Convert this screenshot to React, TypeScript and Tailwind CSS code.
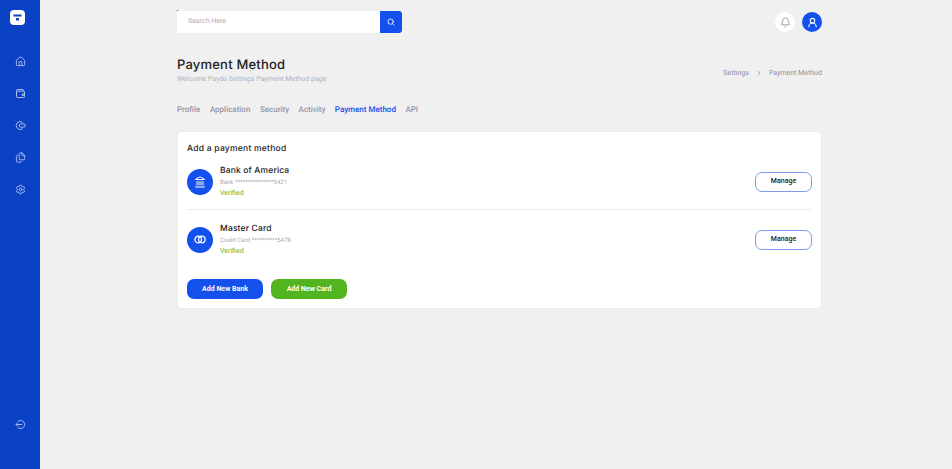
import React from 'react';
import { Bell, ChevronRight, Files, Home, Landmark, Search, Settings, UserRound } from 'lucide-react';

const heading = "font-['Inter','Liberation_Sans',sans-serif]";

const tabs = ['Profile', 'Application', 'Security', 'Activity', 'Payment Method', 'API'];

const Logo = () => (
  <div className="w-[15px] h-[15px] bg-white rounded-[4px] flex items-center justify-center">
    <svg width="9" height="9" viewBox="0 0 9 9">
      <rect x="0.5" y="1.5" width="8" height="2" fill="#0b41c4" />
      <rect x="3" y="5" width="3" height="2.4" fill="#0b41c4" />
    </svg>
  </div>
);

const WalletIcon = () => (
  <svg width="11" height="11" viewBox="0 0 11 11" fill="none" stroke="currentColor" strokeWidth="1">
    <path d="M1.5 3.5V2.2a.8.8 0 0 1 .8-.7h5.4a.8.8 0 0 1 .8.7v1" />
    <rect x="1.5" y="3.2" width="8" height="6.3" rx="0.8" />
    <path d="M9.5 6H7.2v1.4h2.3" />
  </svg>
);

const CardShieldIcon = () => (
  <svg width="11" height="11" viewBox="0 0 11 11" fill="none" stroke="currentColor" strokeWidth="1">
    <path d="M7.5 2.2A4 4 0 1 0 7.5 8.8" />
    <rect x="4.5" y="3.9" width="5.5" height="3.2" rx="0.7" />
  </svg>
);

const ExitIcon = () => (
  <svg width="11" height="11" viewBox="0 0 11 11" fill="none" stroke="currentColor" strokeWidth="1">
    <path d="M2.6 2.8A4 4 0 1 1 2.6 8.2" />
    <path d="M7 5.5H1M2.8 3.7 1 5.5l1.8 1.8" />
  </svg>
);

const Rings = () => (
  <svg width="12" height="9" viewBox="0 0 12 9" fill="none" stroke="white" strokeWidth="1.3">
    <circle cx="4.2" cy="4.5" r="3.3" />
    <circle cx="7.8" cy="4.5" r="3.3" />
  </svg>
);

const Method = ({ icon, name, detail }: { icon: React.ReactNode; name: string; detail: string }) => (
  <div className="flex items-center justify-between">
    <div className="flex items-center gap-[7px]">
      <div className="w-[26px] h-[26px] rounded-full bg-[#1450ec] flex items-center justify-center">{icon}</div>
      <div>
        <p className={`${heading} text-[8.5px] leading-[12px] font-medium text-[#222] tracking-[0.15px]`}>{name}</p>
        <p className="text-[6px] leading-[10px] mt-[1px] text-[#a9a9b8]">{detail}</p>
        <p className="text-[7px] leading-[10px] text-[#5cb531]">Verified</p>
      </div>
    </div>
    <button className="w-[57px] h-[20px] rounded-[7px] border border-[#7f9df0] bg-white text-[7px] font-medium text-[#222]">
      Manage
    </button>
  </div>
);

const App: React.FC = () => {
  return (
    <div className="h-[469px] w-[952px] flex bg-[#f0f0f0] overflow-hidden font-['Roboto',sans-serif] antialiased [text-rendering:geometricPrecision]">
      <aside className="w-10 bg-[#0b41c4] flex flex-col items-center pt-[10px] pb-[39px]">
        <div className="self-start ml-[10px]">
          <Logo />
        </div>
        <nav className="mt-[31px] flex flex-col gap-[21px] text-[#a8bdf0]">
          <Home size={11} />
          <WalletIcon />
          <CardShieldIcon />
          <Files size={11} />
          <Settings size={11} />
        </nav>
        <div className="mt-auto text-[#a8bdf0]">
          <ExitIcon />
        </div>
      </aside>

      <main className="w-[645px] ml-[137px] pt-[11px]">
        <header className="flex items-center justify-between">
          <div className="relative w-[225px] h-[22px] flex bg-white rounded-[2px]">
            <span className="absolute left-0 -top-px w-px h-px bg-[#555]" />
            <div className="flex-1 pl-[11px] text-[7px] leading-[21px] text-[#a9a9b8]">Search Here</div>
            <div className="w-[22px] bg-[#1450ec] rounded-r-[3px] flex items-center justify-center">
              <Search size={8} strokeWidth={2.5} className="text-white" />
            </div>
          </div>
          <div className="flex items-center gap-[7px]">
            <div className="w-5 h-5 rounded-full bg-white flex items-center justify-center">
              <Bell size={11} className="text-[#9a9aa5]" />
            </div>
            <div className="w-5 h-5 rounded-full bg-[#1450ec] flex items-center justify-center">
              <UserRound size={11} strokeWidth={2.2} className="text-white" />
            </div>
          </div>
        </header>

        <div className="mt-[22px] flex items-center justify-between">
          <div>
            <h1 className={`${heading} text-[13px] leading-[20px] font-medium text-[#222] tracking-[0.2px]`}>Payment Method</h1>
            <p className="text-[7px] leading-[9px] text-[#b0b0bd]">Welcome Paydo Settings Payment Method page</p>
          </div>
          <div className="flex items-center gap-[6px] text-[7px] text-[#8f8fa6] mt-[7px]">
            <span>Settings</span>
            <ChevronRight size={8} />
            <span>Payment Method</span>
          </div>
        </div>

        <div className="mt-[20px] flex gap-[9.5px] text-[8px] leading-[12px] font-medium text-[#9696aa]">
          {tabs.map((t) => (
            <span key={t} className={t === 'Payment Method' ? 'text-[#1450ec]' : ''}>
              {t}
            </span>
          ))}
        </div>

        <section className="mt-[15px] h-[178px] bg-white rounded-[5px] border border-[#ebebeb] px-[9px] pt-[11px]">
          <h2 className={`${heading} text-[8.5px] leading-[12px] font-medium text-[#222] tracking-[0.25px]`}>Add a payment method</h2>
          <div className="mt-[10px]">
            <Method icon={<Landmark size={12} className="text-white" />} name="Bank of America" detail="Bank ***************5421" />
          </div>
          <div className="h-px bg-[#ececec] mt-[11px] mb-[13px]" />
          <Method icon={<Rings />} name="Master Card" detail="Credit Card **********5478" />
          <div className="mt-[23px] flex gap-2">
            <button className="w-[76px] h-5 rounded-[7px] bg-[#1450ec] text-white text-[7px] font-bold">Add New Bank</button>
            <button className="w-[76px] h-5 rounded-[7px] bg-[#52b520] text-white text-[7px] font-bold">Add New Card</button>
          </div>
        </section>
      </main>
    </div>
  );
};

export default App;
